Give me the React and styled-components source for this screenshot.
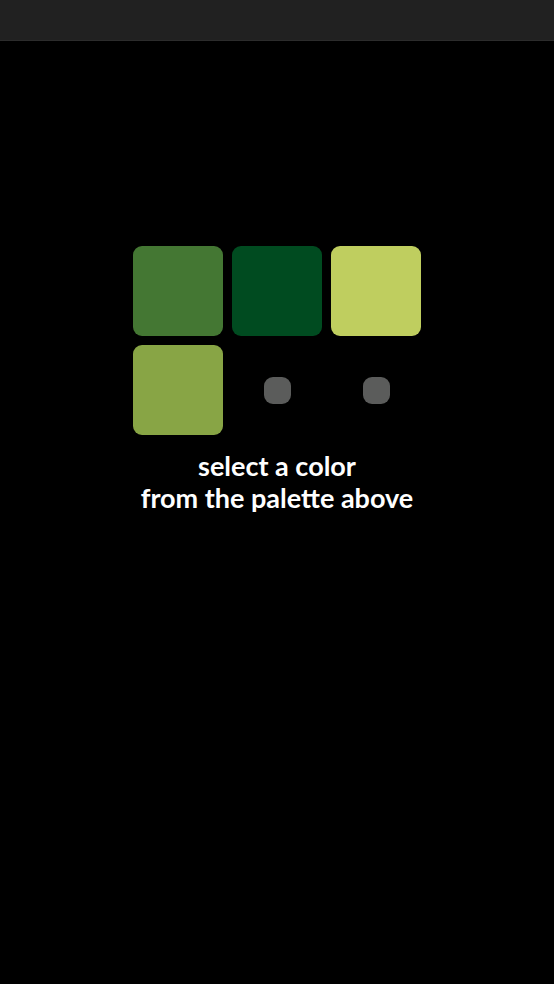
import React from "react";
import styled, { createGlobalStyle } from "styled-components";

const Global = createGlobalStyle`
  html, body { margin: 0; padding: 0; background: #000; }
  body { font-family: "Lato", "DejaVu Sans", sans-serif; }
  #root { min-height: 984px; }
`;

const Page = styled.div`
  min-height: 984px;
  background: #000;
  display: flex;
  flex-direction: column;
`;

const TopBar = styled.header`
  background: #212121;
  border-bottom: 1px solid #2c2c2c;
  box-sizing: border-box;
  height: 41px;
`;

const Main = styled.main`
  display: flex;
  flex-direction: column;
  align-items: center;
  padding-top: 205px;
`;

const Palette = styled.div`
  display: grid;
  grid-template-columns: repeat(3, 90px);
  grid-auto-rows: 90px;
  gap: 9px;
`;

const Swatch = styled.button`
  width: 90px;
  height: 90px;
  border: 0;
  padding: 0;
  border-radius: 9px;
  background: ${(p) => p.$color};
  cursor: pointer;
`;

const EmptySlot = styled.div`
  display: flex;
  align-items: center;
  justify-content: center;
`;

const Dot = styled.span`
  width: 27px;
  height: 27px;
  border-radius: 9px;
  background: #5b5c5b;
`;

const Hint = styled.p`
  margin: 15px 0 0;
  color: #fff;
  font-family: "Lato", "DejaVu Sans", sans-serif;
  font-weight: 700;
  font-size: 27px;
  line-height: 32px;
  text-align: center;
`;

const colors = ["#447733", "#004b20", "#bfce5f", "#88a545"];

export default function App() {
  return (
    <>
      <Global />
      <Page>
        <TopBar />
        <Main>
          <Palette>
            {colors.map((c) => (
              <Swatch key={c} $color={c} aria-label={c} />
            ))}
            <EmptySlot>
              <Dot />
            </EmptySlot>
            <EmptySlot>
              <Dot />
            </EmptySlot>
          </Palette>
          <Hint>
            select a color
            <br />
            from the palette above
          </Hint>
        </Main>
      </Page>
    </>
  );
}
